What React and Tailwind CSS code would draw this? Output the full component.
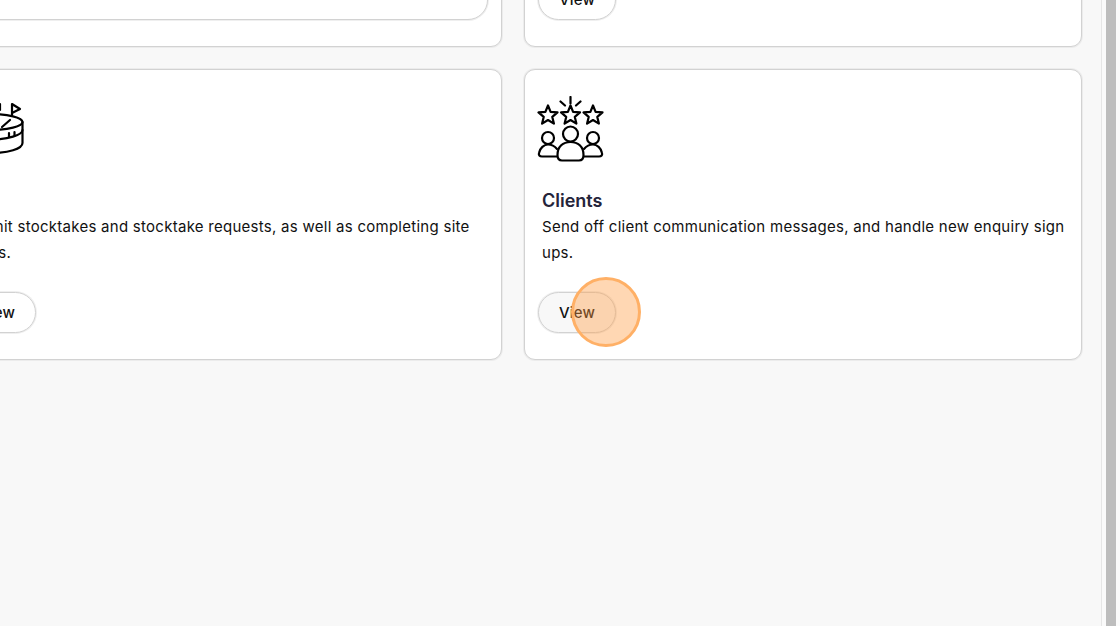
import React from "react";

const font = { fontFamily: "Inter, 'Liberation Sans', sans-serif" };

function starPoints(cx, cy, R, r) {
  const pts = [];
  for (let i = 0; i < 10; i++) {
    const rad = i % 2 === 0 ? R : r;
    const a = (Math.PI / 5) * i - Math.PI / 2;
    pts.push(`${(cx + rad * Math.cos(a)).toFixed(1)},${(cy + rad * Math.sin(a)).toFixed(1)}`);
  }
  return pts.join(" ");
}

function ClientsIcon() {
  return (
    <svg width="68" height="68" viewBox="0 0 68 68" fill="none" stroke="#000" strokeWidth="2.2" strokeLinejoin="round" strokeLinecap="round">
      <polygon points={starPoints(11, 19.5, 10, 4.5)} />
      <polygon points={starPoints(33.5, 19.5, 10, 4.5)} />
      <polygon points={starPoints(56, 19.5, 10, 4.5)} />
      <path d="M33.5 1V7.5M23.5 5.5L28 9.5M43.5 5.5L39 9.5" />
      <circle cx="33.5" cy="38" r="7.5" />
      <path d="M20.5 59C20.5 50.5 26 46 33.5 46C41 46 46.5 50.5 46.5 59C46.5 63 45 64.5 42 64.5H25C22 64.5 20.5 63 20.5 59Z" />
      <circle cx="11" cy="42" r="6" />
      <circle cx="56" cy="42" r="6" />
      <path d="M20 60.5H5C2.5 60.5 1.5 59 2 57C3 52 7 48.5 11 48.5C14.5 48.5 17.5 50 20 53" />
      <path d="M47 60.5H62C64.5 60.5 65.5 59 65 57C64 52 60 48.5 56 48.5C52.5 48.5 49.5 50 47 53" />
    </svg>
  );
}

function StadiumIcon() {
  return (
    <svg width="68" height="68" viewBox="0 0 68 68" fill="none" stroke="#000" strokeWidth="2.2" strokeLinejoin="round" strokeLinecap="round">
      <path d="M55 19V8L63 13L55 17" />
      <path d="M43 14V8" />
      <ellipse cx="33" cy="26" rx="32.5" ry="8" />
      <path d="M0.5 26V47C0.5 53 15 57 33 57C51 57 65.5 53 65.5 47V26" />
      <path d="M0.5 34C0.5 39 15 43.5 33 43.5C51 43.5 65.5 39 65.5 34" />
      <path d="M45 31L53 24" />
      <path d="M52 37V41M57.5 36V40" />
    </svg>
  );
}

function ViewButton({ hovered }) {
  return (
    <button className={`ml-[-4px] h-[41px] w-[78px] rounded-full border border-[#d2d2d2] pt-[1px] text-[15px] font-medium tracking-[0.2px] text-[#111] shadow-[0_0_0_1px_#efefef] ${hovered ? "bg-[#f8f8f8]" : "bg-white"}`}>
      View
    </button>
  );
}

function Card({ icon, title, text, hovered }) {
  return (
    <div className="flex h-[291px] flex-col rounded-[11px] border border-[#d2d2d2] bg-white pl-[17px] pr-[13px] pt-[26px] shadow-[0_0_0_1px_#ececec]">
      <div className="ml-[-5px] h-[68px]">{icon}</div>
      <h3 className="mt-[25px] text-[18px] font-semibold leading-[24px] text-[#24243a]">{title}</h3>
      <p className="mt-[1px] text-[15px] leading-[26px] tracking-[0.27px] text-[#111]">{text}</p>
      <div className="mt-[26px]">
        <ViewButton hovered={hovered} />
      </div>
    </div>
  );
}

export default function App() {
  return (
    <div className="relative flex h-screen w-screen overflow-hidden bg-[#f8f8f8]" style={font}>
      <main className="min-w-0 flex-1 overflow-hidden">
        <div className="ml-[-56px] mr-[19px] mt-[-244px] grid grid-cols-2 gap-x-[22px] gap-y-[22px]">
          <div className="flex h-[291px] flex-col justify-end rounded-[11px] border border-[#d2d2d2] bg-white px-[13px] pb-[26px] shadow-[0_0_0_1px_#ececec]">
            <div className="h-[41px] rounded-[20px] border border-[#d2d2d2] bg-white shadow-[0_0_0_1px_#efefef]" />
          </div>
          <div className="flex h-[291px] flex-col justify-end rounded-[11px] border border-[#d2d2d2] bg-white pb-[26px] pl-[17px] shadow-[0_0_0_1px_#ececec]">
            <div>
              <ViewButton />
            </div>
          </div>
          <Card
            icon={<StadiumIcon />}
            title="Site"
            text="Submit stocktakes and stocktake requests, as well as completing site audits."
          />
          <Card
            icon={<ClientsIcon />}
            title="Clients"
            text="Send off client communication messages, and handle new enquiry sign ups."
            hovered
          />
        </div>
      </main>

      {/* scrollbar */}
      <div className="flex w-[19px] shrink-0 border-l border-[#e6e6e6] bg-[#fafafa] pl-[4px]">
        <div className="h-full w-[10px] bg-[#bdbdbd]" />
      </div>

      {/* click marker */}
      <div className="absolute left-[571px] top-[277px] h-[70px] w-[70px] rounded-full border-[3px] border-[#ffb066] bg-[#ff9b40]/40" />
    </div>
  );
}
